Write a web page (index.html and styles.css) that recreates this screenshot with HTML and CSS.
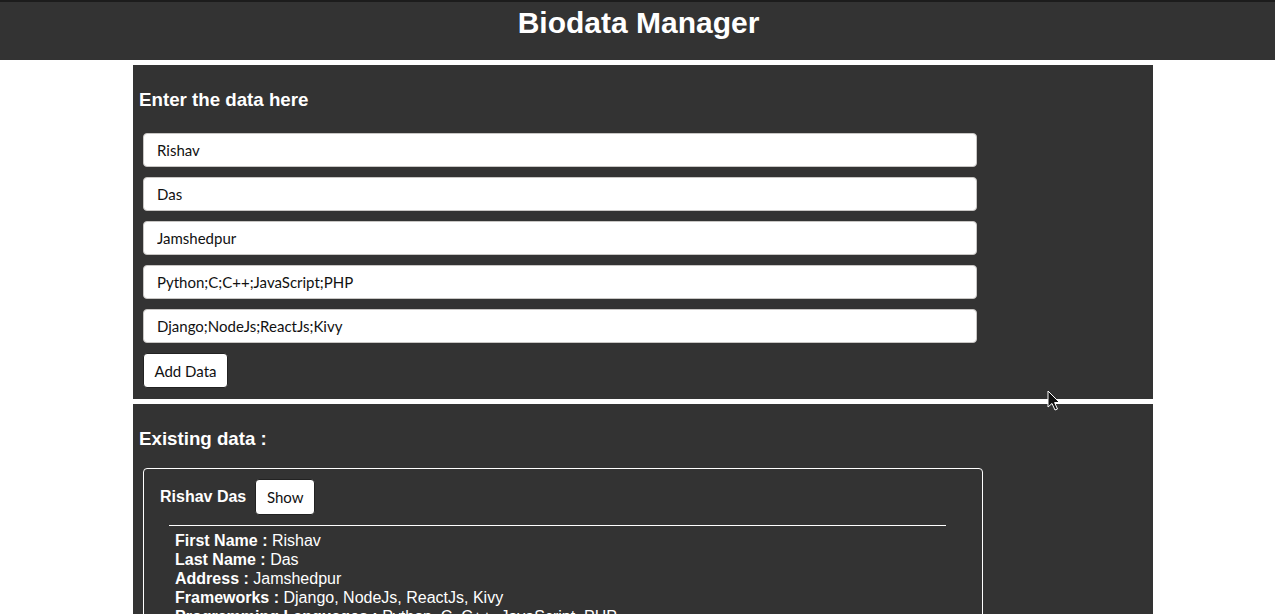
FILE: index.html
```html
<!DOCTYPE html>
<html>
<head>
<meta charset="utf-8">
<title>Biodata Manager</title>
<link rel="stylesheet" href="styles.css">
</head>
<body>
<header class="topbar">
  <h1 class="title">Biodata Manager</h1>
</header>
<main class="page">
  <section class="panel panel-form">
    <h3 class="panel-title">Enter the data here</h3>
    <div class="form">
      <input class="field" type="text" value="Rishav">
      <input class="field" type="text" value="Das">
      <input class="field" type="text" value="Jamshedpur">
      <input class="field" type="text" value="Python;C;C++;JavaScript;PHP">
      <input class="field" type="text" value="Django;NodeJs;ReactJs;Kivy">
      <button class="btn btn-add" type="button">Add Data</button>
    </div>
  </section>
  <section class="panel panel-list">
    <h3 class="panel-title">Existing data :</h3>
    <div class="card">
      <div class="card-head">
        <span class="card-name">Rishav Das</span>
        <button class="btn btn-show" type="button">Show</button>
      </div>
      <hr class="card-rule">
      <div class="details">
        <div><b>First Name :</b> Rishav</div>
        <div><b>Last Name :</b> Das</div>
        <div><b>Address :</b> Jamshedpur</div>
        <div><b>Frameworks :</b> Django, NodeJs, ReactJs, Kivy</div>
        <div><b>Programming Languages :</b> Python, C, C++, JavaScript, PHP</div>
      </div>
    </div>
  </section>
</main>
<svg class="cursor" width="14" height="22" viewBox="0 0 14 22">
  <path d="M1 1 L1 17 L5 13.5 L8 20 L10.5 19 L7.6 12.6 L12.5 12.5 Z" fill="#111" stroke="#fff" stroke-width="1" stroke-linejoin="round"/>
</svg>
</body>
</html>
```

FILE: styles.css
```css
html, body {
  margin: 0;
  padding: 0;
  background: #ffffff;
  font-family: "Liberation Sans", Arial, sans-serif;
  overflow: hidden;
}

.topbar {
  height: 58px;
  background: #333333;
  border-top: 2px solid #1c1c1c;
  display: flex;
  justify-content: center;
}

.title {
  margin: 4px 0 0 2px;
  font-size: 30px;
  line-height: 34px;
  font-weight: bold;
  color: #ffffff;
}

.page {
  width: 1020px;
  margin: 5px 0 0 133px;
  display: flex;
  flex-direction: column;
  gap: 5px;
}

.panel {
  background: #333333;
  padding: 0 0 11px 0;
}

.panel-title {
  margin: 0;
  padding: 24px 0 0 6px;
  font-size: 18.72px;
  line-height: 22px;
  font-weight: bold;
  color: #ffffff;
}

.form {
  margin: 22px 0 0 10px;
  display: flex;
  flex-direction: column;
  align-items: flex-start;
  gap: 10px;
}

.field {
  box-sizing: border-box;
  width: 834px;
  height: 34px;
  margin: 0;
  padding: 0 13px;
  border: 1px solid #c8c6c4;
  border-radius: 4px;
  background: #ffffff;
  font-family: "Lato", "Open Sans", sans-serif;
  font-size: 15px;
  color: #111111;
}

.btn {
  box-sizing: border-box;
  margin: 0;
  background: #ffffff;
  border: 1px solid #222222;
  border-radius: 4px;
  font-family: "Lato", "Open Sans", sans-serif;
  font-size: 15px;
  color: #111111;
  padding: 0;
  white-space: nowrap;
}

.btn-add {
  height: 35px;
  width: 85px;
}

.panel-list {
  padding-bottom: 40px;
}

.card {
  margin: 18px 0 0 10px;
  width: 840px;
  box-sizing: border-box;
  border: 1px solid #ffffff;
  border-radius: 4px;
  padding: 10px 0 0 0;
  color: #ffffff;
}

.card-head {
  display: flex;
  align-items: center;
  gap: 9px;
  padding-left: 16px;
}

.card-name {
  font-size: 16px;
  font-weight: bold;
}

.btn-show {
  height: 36px;
  width: 60px;
}

.card-rule {
  margin: 10px 36px 0 25px;
  border: 0;
  border-top: 1px solid #ffffff;
  height: 0;
}

.details {
  padding: 5px 0 0 31px;
  font-size: 16px;
  line-height: 19px;
}

.cursor {
  position: absolute;
  left: 1047px;
  top: 390px;
}
```
